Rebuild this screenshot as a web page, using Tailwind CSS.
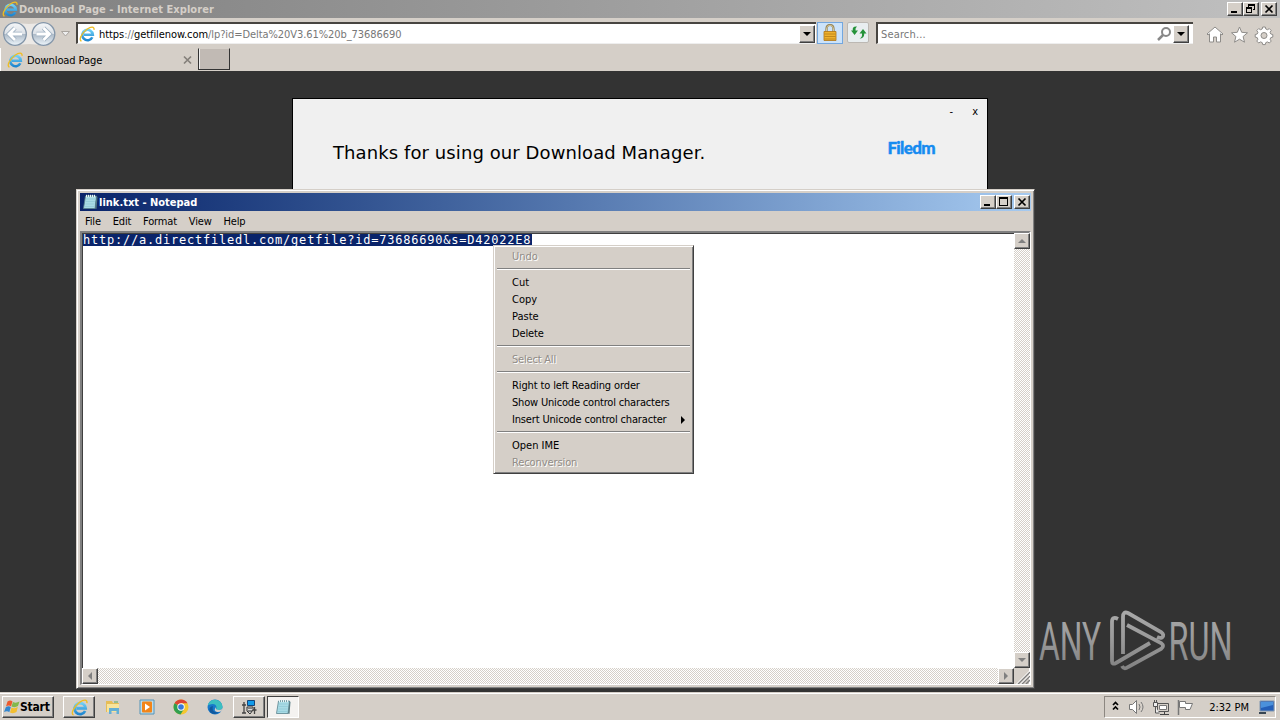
<!DOCTYPE html>
<html>
    <head>
        <meta charset="UTF-8">
        <title>Download Page</title>
        <script src="https://cdn.jsdelivr.net/npm/@tailwindcss/browser@4"></script>
    </head>
    <body class="w-[1280px] h-[720px] overflow-hidden relative flex flex-col bg-[#333] text-black text-[11px] leading-[17px] font-['DejaVu_Sans_Condensed','DejaVu_Sans',sans-serif] whitespace-nowrap cursor-default">
        <!-- shared icons -->
        <svg class="absolute w-0 h-0">
            <defs>
                <linearGradient id="ieBlue" x1="0" y1="0" x2="0" y2="1">
                    <stop offset="0" stop-color="#6fd0f7"/><stop offset="1" stop-color="#1f86cf"/>
                </linearGradient>
                <linearGradient id="nav" x1="0" y1="0" x2="0" y2="1">
                    <stop offset="0" stop-color="#f4f6f8"/><stop offset=".48" stop-color="#dce1e7"/><stop offset=".52" stop-color="#aebbc8"/><stop offset="1" stop-color="#edf5fb"/>
                </linearGradient>
                <linearGradient id="mark" gradientUnits="userSpaceOnUse" x1="0" y1="5" x2="0" y2="66">
                    <stop offset="0" stop-color="#aaa"/><stop offset=".5" stop-color="#999"/><stop offset="1" stop-color="#808080"/>
                </linearGradient>
                <symbol id="ie" viewBox="0 0 16 16">
                    <path d="M13.300 11.300A5.200 5.200 0 1 1 13.800 8.700H5" fill="none" stroke="url(#ieBlue)" stroke-width="2.600"/>
                    <path d="M2.500 15C-.5 14.500 2 7.500 8 3.200 12 .4 15.500.2 15 3.800" fill="none" stroke="#efbd22" stroke-width="1.300"/>
                </symbol>
                <symbol id="note" viewBox="0 0 16 16">
                    <path d="M3.500 2h11l-1.500 12.500H1.500z" fill="#a9dbe5" stroke="#58828d" stroke-width=".8"/>
                    <path d="M4 5h9M3.800 7.500h9M3.500 10h9M3 12.500h9" stroke="#8ec8d5" stroke-width=".7"/>
                    <path d="M13 14.500 14.500 2l1 1-1 12z" fill="#557b83"/>
                    <path d="M4.500.8v2.400M6.500.8v2.400M8.500.8v2.400M10.500.8v2.400M12.500.8v2.400" stroke="#e9f6f8" stroke-width="1"/>
                    <path d="M5.500 1v2M7.500 1v2M9.500 1v2M11.500 1v2" stroke="#6f939b" stroke-width=".7"/>
                </symbol>
            </defs>
        </svg>

        <!-- Internet Explorer -->
        <header class="h-[71px] shrink-0 bg-[#d5cfc8] flex flex-col">
            <div class="h-[18px] flex items-center bg-linear-to-r from-[#808080] to-[#c0c0c0] pl-[2px] pr-[3px]">
                <svg class="size-4 mr-[1px]"><use href="#ie"/></svg>
                <span class="flex-1 font-bold text-[#d5cfc8] tracking-[0.06px]">Download Page - Internet Explorer</span>
                <div class="flex h-[14px]">
                    <div class="w-4 bg-[#d5cfc8] border border-t-white border-l-white border-r-[#404040] border-b-[#404040] shadow-[inset_-1px_-1px_#808080]"><svg class="w-[14px] h-3"><path d="M3 8h6v2H3z"/></svg></div>
                    <div class="w-4 bg-[#d5cfc8] border border-t-white border-l-white border-r-[#404040] border-b-[#404040] shadow-[inset_-1px_-1px_#808080]"><svg class="w-[14px] h-3" fill="none" stroke="#000" shape-rendering="crispEdges"><path d="M4.500 4V1.500h6v5H9M4 2.500h7M2.500 4.500h5v5h-5zM2 5.500h6"/></svg></div>
                    <div class="w-4 ml-[2px] bg-[#d5cfc8] border border-t-white border-l-white border-r-[#404040] border-b-[#404040] shadow-[inset_-1px_-1px_#808080]"><svg class="w-[14px] h-3" stroke="#000" stroke-width="1.700"><path d="m3.500 2.500 7 7m0-7-7 7"/></svg></div>
                </div>
            </div>
            <div class="h-[30px] flex pt-1">
                <svg class="w-[76px] h-[26px] shrink-0">
                    <path d="M15 0q14 4 28 0a12 12 0 0 1 0 24q-14-4-28 0A12 12 0 0 1 15 0" fill="#ece9e6"/>
                    <circle cx="15" cy="12" r="11.300" fill="url(#nav)" stroke="#8395a8" stroke-width="1.300"/>
                    <circle cx="43.500" cy="12" r="11.300" fill="url(#nav)" stroke="#8395a8" stroke-width="1.300"/>
                    <g fill="none" stroke="#9eb0c1" stroke-width="4.500"><path d="M22 12H9m6-6-6 6 6 6M36.500 12h13m-6-6 6 6-6 6"/></g>
                    <g fill="none" stroke="#fff" stroke-width="2.800"><path d="M22 12H9m6-6-6 6 6 6M36.500 12h13m-6-6 6 6-6 6"/></g>
                    <path d="M61.500 9.500h8l-4 4.500z" fill="#eee" stroke="#aaa59f"/>
                </svg>
                <div class="w-[740px] h-[22px] flex bg-white border-t-2 border-l-2 border-t-[#484541] border-l-[#484541] border-b border-b-[#eee] pl-px items-center">
                    <svg class="size-4 mr-[4px]"><use href="#ie"/></svg>
                    <span class="flex-1 pt-px text-[#777] tracking-[-0.07px]"><span class="text-black">https</span>://<span class="text-black">getfilenow.com</span>/lp?id=Delta%20V3.61%20b_73686690</span>
                    <div class="w-4 h-[18px] mr-px bg-[#d5cfc8] border border-t-white border-l-white border-r-[#404040] border-b-[#404040] shadow-[inset_-1px_-1px_#808080]"><svg class="w-[14px] h-4"><path d="M3 6h8l-4 4z"/></svg></div>
                </div>
                <div class="w-[26px] h-[22px] ml-px bg-[#cce3fa] border border-[#73a7df]">
                    <svg class="w-6 h-5"><path d="M8.500 10V6q0-4 3.500-4t3.500 4v4" fill="none" stroke="#8d7a4c" stroke-width="2.200"/><path d="M8.500 10V6q0-3.800 3.500-3.800T15.500 6v4" fill="none" stroke="#e5d9ab" stroke-width=".8"/><path d="M6 8.500h12v9H6z" fill="#eeb12d" stroke="#ae7414" stroke-width=".8"/><path d="M6.500 11h11M6.500 13.500h11M6.500 16h11" stroke="#b57d18" stroke-width=".8"/></svg>
                </div>
                <div class="w-[22px] h-[21px] ml-1 rounded-[2px] bg-[#e9eef0] border border-[#bcb8b3]">
                    <svg class="w-5 h-[19px]" fill="#249239"><path d="M9 3.500q-5-.5-4.200 4H3l3.600 4.500L10 7.500H7.500Q7 5 9 3.500M11.500 15.500q3-1 2.500-5h-2.500l3.500-4.500 3.500 4.500h-2.200q0 5-4.800 5"/></svg>
                </div>
                <div class="w-[317px] h-[22px] ml-[7px] flex bg-white border-t-2 border-l-2 border-t-[#484541] border-l-[#484541] border-b border-b-[#eee] pl-[3px] items-center">
                    <span class="flex-1 pt-px text-[#777] tracking-[0.15px]">Search...</span>
                    <svg class="w-[18px] h-[18px]" fill="none" stroke="#888"><circle cx="11" cy="7" r="4" stroke-width="2"/><path d="m8 10-5 5" stroke-width="2.500"/></svg>
                    <div class="w-4 h-[18px] mr-[4px] bg-[#d5cfc8] border border-t-white border-l-white border-r-[#404040] border-b-[#404040] shadow-[inset_-1px_-1px_#808080]"><svg class="w-[14px] h-4"><path d="M3 6h8l-4 4z"/></svg></div>
                </div>
                <svg class="w-[72px] h-[26px] ml-[13px]" fill="#fff" stroke="#8e8c89">
                    <path d="m9 5 8 7-1 1-1.500-1.200V20h-4v-5h-3v5h-4v-8.200L2 13l-1-1z"/>
                    <path d="m33.500 5 2.200 5.300 5.800.5-4.400 3.700 1.400 5.700-5-3-5 3 1.400-5.700-4.400-3.700 5.800-.5z"/>
                    <path d="m56.700 5 2.600 0 .5 2 1.700.7 1.800-1.100 1.900 1.900-1.100 1.800.7 1.700 2 .5v2.600l-2 .5-.7 1.700 1.100 1.800-1.900 1.900-1.800-1.100-1.700.7-.5 2h-2.600l-.5-2-1.700-.7-1.800 1.100-1.900-1.900 1.100-1.800-.7-1.700-2-.5v-2.600l2-.5.7-1.700-1.100-1.800 1.900-1.900 1.800 1.100 1.700-.7z"/>
                    <circle cx="58" cy="13.500" r="3" fill="#d5cfc8"/>
                </svg>
            </div>
            <div class="h-[23px] flex">
                <div class="w-[198px] h-[23px] flex items-center pl-[6px] border-l border-white">
                    <svg class="size-4 mr-1"><use href="#ie"/></svg>
                    <span class="flex-1 pt-px tracking-[-0.08px]">Download Page</span>
                    <svg class="w-[15px] h-3 mr-px" stroke="#85807b" stroke-width="1.700"><path d="m2 2.500 7 7m0-7-7 7"/></svg>
                </div>
                <div class="w-8 h-[22px] bg-[#c1bab4] border-l border-t border-t-[#d5cfc8] border-r border-b border-[#333] shadow-[inset_1px_0_#eee]"></div>
            </div>
        </header>

        <!-- page content -->
        <main class="h-[621px] shrink-0 flex justify-center pt-[27px]">
            <section class="w-[696px] h-[500px] bg-[#f0f0f0] border border-black flex flex-col">
                <div class="flex justify-end gap-[19px] pr-[9px] pt-[4px] h-[39px]"><span>-</span><span>x</span></div>
                <div class="flex justify-between pl-[40px] pr-[52px]">
                    <h1 class="font-['DejaVu_Sans'] text-[18px] leading-[30px] tracking-[0.09px]">Thanks for using our Download Manager.</h1>
                    <span class="font-['Lato'] font-black text-[17px] leading-[20px] text-[#168bf0] tracking-[-0.65px] [-webkit-text-stroke:0.4px_#168bf0]">Filedm</span>
                </div>
            </section>
        </main>

        <!-- taskbar -->
        <footer class="h-7 shrink-0 bg-[#d5cfc8] border-t border-[#d5cfc8] shadow-[inset_0_1px_#fff] flex items-center pl-[2px] pr-1 pt-[1px]">
            <div class="w-[52px] h-[22px] flex items-center border border-t-white border-l-white border-r-[#404040] border-b-[#404040] shadow-[inset_-1px_-1px_#808080]">
                <svg class="w-[17px] h-4 shrink-0"><path d="M4.500 2.500q3-2 5 0L8 7.500Q6 5.500 3 7.500z" fill="#ed5a2d"/><path d="M10 3q3 1.500 6.500-.5L15 7q-3 2-6.500.5z" fill="#83b84b"/><path d="M2.800 8.300q3-2 5 0l-1.500 5Q4.500 11.500 1 13z" fill="#3386cf"/><path d="M8.500 8.500q3 1.500 6.300-.5L13.500 13q-3 2-6.500.5z" fill="#f3be30"/></svg>
                <span class="font-bold text-[12px] tracking-[-0.2px]">Start</span>
            </div>
            <div class="w-8 h-[22px] ml-[9px] flex items-center justify-center border border-t-white border-l-white border-r-[#404040] border-b-[#404040] shadow-[inset_-1px_-1px_#808080]"><svg class="size-[17px]"><use href="#ie"/></svg></div>
            <svg class="size-4 ml-[10px]"><path d="M1 2h6l1 2h6v9H1z" fill="#e6bd56"/><path d="M2 5h12v8H2z" fill="#f8e49b"/><path d="M4 15V9h10v6h-2.500v-3h-5v3z" fill="#65afd4"/><path d="M9 3h4" stroke="#58a85a"/></svg>
            <svg class="size-4 ml-[18px]"><path d="M1 1h14v14H1z" fill="#bbdbea" stroke="#5594b8"/><rect x="3" y="2.500" width="10" height="11" rx="1" fill="#f28519"/><path d="m6 4.500 5 3.500-5 3.500z" fill="#fff"/></svg>
            <svg class="size-4 ml-[18px]"><circle cx="8" cy="8" r="7.500" fill="#f4c72f"/><path d="M8 8 1.500 4.300A7.500 7.500 0 0 1 14.500 4.300H8z" fill="#dc4434"/><path d="M1.500 4.300A7.500 7.500 0 0 0 7.500 15.500L11 10 8 8z" fill="#309f50"/><circle cx="8" cy="8" r="3.700" fill="#fff"/><circle cx="8" cy="8" r="2.800" fill="#3979d9"/></svg>
            <svg class="size-4 ml-[18px]"><circle cx="8" cy="8" r="7.500" fill="#1879ca"/><path d="M.7 6.500A7.500 7.500 0 0 1 15.500 8q0 3-4 3-3 0-2-2 0-4-4-4-3 0-4.800 1.500" fill="#3cbfc0"/><path d="M6 7q-2 7 6 6-5 4-9 0Q1 8 6 7" fill="#11599e"/><path d="M9 8q-1 3 3 3 3 0 3.500-2l-.5 2.500q-2 2-5 1.500-4-1-1-5" fill="#d5cfc8"/></svg>
            <div class="w-8 h-[22px] ml-[10px] flex items-center justify-center border border-t-white border-l-white border-r-[#404040] border-b-[#404040] shadow-[inset_-1px_-1px_#808080]">
                <svg class="size-4"><path d="M6.500 1.500h7v5h-7z" fill="#129bea" stroke="#154679"/><path d="M3 3v11M1 6h4M1 14h4M13.500 8v7M11.500 11h4" fill="none" stroke="#444" stroke-width="1.300"/><path d="M6 8h6v3l-3 4-3-3z" fill="#ddd" stroke="#333"/><path d="M8 9v1M10 9v1M7 12h4" stroke="#222"/></svg>
            </div>
            <div class="w-8 h-[22px] ml-[2px] flex items-center justify-center bg-[#f4f2f0] border border-t-[#404040] border-l-[#404040] border-r-white border-b-white"><svg class="size-4"><use href="#note"/></svg></div>
            <div class="w-[172px] h-[22px] ml-auto flex items-center border border-t-[#8c8781] border-l-[#8c8781] border-r-white border-b-white">
                <svg class="w-[73px] h-5 ml-[6px] mr-[20px]" fill="none" stroke="#000"><path d="m2 8 2.500-2.500L7 8M2 12.500 4.500 10 7 12.500" stroke-width="1.700"/></svg>
                <span class="ml-auto mr-[10px]">2:32 PM</span>
                <svg class="w-4 h-4"><path d="M1 2h14v10H1z" fill="#245fb8" stroke="#8097b0"/><path d="M2 3h12v3L2 9z" fill="#4b91db"/><path d="M0 13h7v2H0z" fill="#384653"/></svg>
            </div>
        </footer>

        <!-- tray icons -->
        <svg class="absolute left-[1128px] top-[699px] w-[68px] h-[18px]" fill="#fff" stroke="#777">
            <path d="M1.500 5.500h3l4-4v13l-4-4h-3z"/><path d="M11 5q2 3 0 6M13 3q4 5 0 10" fill="none"/>
            <path d="M29.500 4.500h11v8h-11z" fill="#d5cfc8" stroke="#555"/><path d="M31.500 6.500h7v4h-7z"/><path d="M32 15.500h9M36.500 13v2" stroke="#444"/><path d="M25.500 3.500h4v4h-4zM26.500 1v2M28.500 1v2M27.500 8v6h4" fill="#eee" stroke="#555"/>
            <path d="M50.500 1v15" stroke-width="1.500"/><path d="M51.500 2.500h6v2h7l-2.500 6h-4.500v-2h-6z"/>
        </svg>

        <!-- watermark -->
        <svg class="absolute left-[1039px] top-[605px] w-[220px] h-[80px] overflow-visible font-['Roboto']" fill="url(#mark)">
            <text x="0" y="54.500" font-size="53.500" textLength="62" lengthAdjust="spacingAndGlyphs">ANY</text>
            <text x="129.500" y="54.500" font-size="53.500" textLength="64" lengthAdjust="spacingAndGlyphs">RUN</text>
            <g fill="none" stroke="url(#mark)" stroke-width="3.800">
                <path d="M79 14q-6-3-6 3v39q0 4 4 2l34-20"/>
                <path d="M84 49V12q0-6 5-4l33 19q4 3 1 5.500-2 1-5-.5"/>
                <path d="m88 20 34 18q4 3 0 6L89 62q-4 3-6-1"/>
            </g>
        </svg>

        <!-- Notepad -->
        <section class="absolute left-[76px] top-[189px] w-[959px] h-[500px] bg-[#d5cfc8] border border-t-[#d5cfc8] border-l-[#d5cfc8] border-r-[#404040] border-b-[#404040] shadow-[inset_1px_1px_#fff,inset_-1px_-1px_#808080] p-[3px] flex flex-col">
            <div class="h-[18px] flex items-center bg-linear-to-r from-[#0a246a] to-[#a6caf0] pl-[2px] pr-[1px]">
                <svg class="size-4 mr-[1px]"><use href="#note"/></svg>
                <span class="flex-1 font-bold text-white">link.txt - Notepad</span>
                <div class="flex h-[14px]">
                    <div class="w-4 bg-[#d5cfc8] border border-t-white border-l-white border-r-[#404040] border-b-[#404040] shadow-[inset_-1px_-1px_#808080]"><svg class="w-[14px] h-3"><path d="M3 8h6v2H3z"/></svg></div>
                    <div class="w-4 bg-[#d5cfc8] border border-t-white border-l-white border-r-[#404040] border-b-[#404040] shadow-[inset_-1px_-1px_#808080]"><svg class="w-[14px] h-3" fill="none" stroke="#000" shape-rendering="crispEdges"><path d="M2.500 1.500h8v8h-8zM2 2.500h9"/></svg></div>
                    <div class="w-4 ml-[2px] bg-[#d5cfc8] border border-t-white border-l-white border-r-[#404040] border-b-[#404040] shadow-[inset_-1px_-1px_#808080]"><svg class="w-[14px] h-3" stroke="#000" stroke-width="1.700"><path d="m3.500 2.500 7 7m0-7-7 7"/></svg></div>
                </div>
            </div>
            <nav class="h-5 flex items-center gap-[11.800px] pl-[5px] tracking-[-0.15px]"><span>File</span><span>Edit</span><span>Format</span><span>View</span><span>Help</span></nav>
            <div class="h-[454px] grid grid-cols-[932px_16px] grid-rows-[435px_16px] border-2 border-b border-t-[#808080] border-l-[#808080] border-r-white border-b-white">
                <div class="bg-white shadow-[inset_1px_1px_#404040] pl-[1px] pt-[1px]">
                    <span class="block w-[449px] h-3 bg-[#0a246a] text-white font-['DejaVu_Sans_Mono'] text-[12px] leading-[12px] tracking-[0.78px]">http://a.directfiledl.com/getfile?id=73686690&amp;s=D42022E8</span>
                </div>
                <div class="flex flex-col justify-between bg-[repeating-conic-gradient(#fff_0_25%,#d5cfc8_0_50%)] bg-[length:2px_2px]">
                    <svg class="w-4 h-4 bg-[#d5cfc8] border border-t-white border-l-white border-r-[#404040] border-b-[#404040] shadow-[inset_-1px_-1px_#808080]"><path d="M3 9h8L7 5z" fill="#808080"/></svg>
                    <svg class="w-4 h-4 bg-[#d5cfc8] border border-t-white border-l-white border-r-[#404040] border-b-[#404040] shadow-[inset_-1px_-1px_#808080]"><path d="M3 5h8L7 9z" fill="#808080"/></svg>
                </div>
                <div class="flex justify-between bg-[repeating-conic-gradient(#fff_0_25%,#d5cfc8_0_50%)] bg-[length:2px_2px]">
                    <svg class="w-4 h-4 bg-[#d5cfc8] border border-t-white border-l-white border-r-[#404040] border-b-[#404040] shadow-[inset_-1px_-1px_#808080]"><path d="M9 3v8L5 7z" fill="#808080"/></svg>
                    <svg class="w-4 h-4 bg-[#d5cfc8] border border-t-white border-l-white border-r-[#404040] border-b-[#404040] shadow-[inset_-1px_-1px_#808080]"><path d="M5 3v8l4-4z" fill="#808080"/></svg>
                </div>
                <svg class="w-4 h-4" stroke="#808080" stroke-width="1.500"><path d="M4 16 16 4M8 16l8-8M12 16l4-4"/><path d="M2.500 16 16 2.500M6.500 16 16 6.500" stroke="#fff" stroke-width="1"/></svg>
            </div>
        </section>

        <!-- context menu -->
        <div class="absolute left-[493px] top-[245px] w-[201px] h-[229px] bg-[#d5cfc8] border border-t-[#d5cfc8] border-l-[#d5cfc8] border-r-[#404040] border-b-[#404040] shadow-[inset_1px_1px_#fff,inset_-1px_-1px_#808080] pt-[2px] px-[3px]">
            <p class="pl-[15px] text-[#918c87] [text-shadow:1px_1px_#fff]">Undo</p>
            <hr class="h-[2px] mt-[3px] mb-1 border-t border-[#808080] border-b border-b-white">
            <p class="pl-[15px]">Cut</p>
            <p class="pl-[15px]">Copy</p>
            <p class="pl-[15px]">Paste</p>
            <p class="pl-[15px] tracking-[-0.15px]">Delete</p>
            <hr class="h-[2px] mt-[3px] mb-1 border-t border-[#808080] border-b border-b-white">
            <p class="pl-[15px] text-[#918c87] tracking-[-0.2px] [text-shadow:1px_1px_#fff]">Select All</p>
            <hr class="h-[2px] mt-[3px] mb-1 border-t border-[#808080] border-b border-b-white">
            <p class="pl-[15px] tracking-[-0.12px]">Right to left Reading order</p>
            <p class="pl-[15px] tracking-[-0.18px]">Show Unicode control characters</p>
            <p class="pl-[15px] pr-[4px] flex justify-between items-center tracking-[-0.16px]">Insert Unicode control character<svg class="w-[5px] h-[8px]"><path d="m0 0 4 4-4 4z"/></svg></p>
            <hr class="h-[2px] mt-[3px] mb-1 border-t border-[#808080] border-b border-b-white">
            <p class="pl-[15px]">Open IME</p>
            <p class="pl-[15px] text-[#918c87] tracking-[-0.1px] [text-shadow:1px_1px_#fff]">Reconversion</p>
        </div>
    </body>
</html>
